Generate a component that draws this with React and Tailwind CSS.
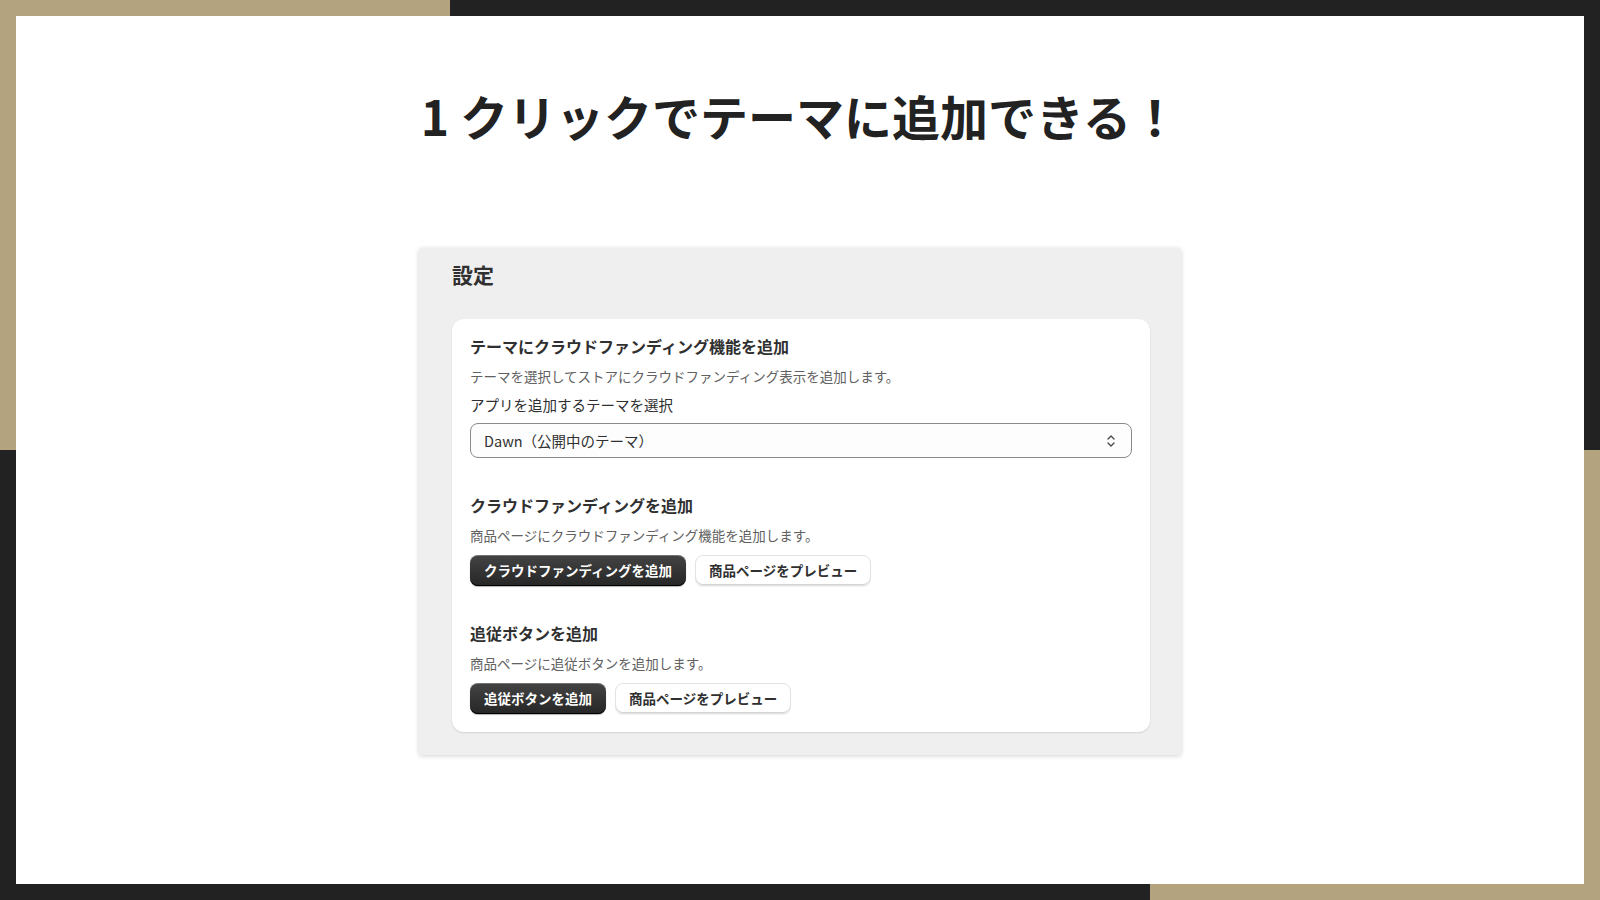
import React from "react";

const jp = { fontFamily: '"Noto Sans CJK JP", "Noto Sans", sans-serif' };

const SelectChevron = () => (
  <svg width="12" height="16" viewBox="0 0 12 16" fill="none" stroke="#4a4a4a" strokeWidth="1.4" strokeLinecap="round" strokeLinejoin="round">
    <path d="M3 6l3-3 3 3" />
    <path d="M3 10l3 3 3-3" />
  </svg>
);

const PrimaryButton = ({ children }) => (
  <button className="h-[31px] px-[14px] rounded-lg bg-gradient-to-b from-[#444444] to-[#262626] text-white text-[13.5px] font-bold leading-none shadow-[inset_0_-1px_0_#000,inset_0_1px_0_rgba(255,255,255,0.25),0_1px_1px_rgba(0,0,0,0.3)]">
    {children}
  </button>
);

const SecondaryButton = ({ children }) => (
  <button className="h-[31px] px-[13px] rounded-lg bg-white text-[#303030] text-[13.5px] font-bold leading-none border border-[#e3e3e3] shadow-[inset_0_-1px_0_#d4d4d4,0_1px_1px_rgba(0,0,0,0.06)]">
    {children}
  </button>
);

const Section = ({ title, description, primary, mt }) => (
  <div className={mt}>
    <h3 className="text-[16px] leading-6 font-bold text-[#303030]">{title}</h3>
    <p className="mt-2 text-[13.5px] leading-5 text-[#616161]">{description}</p>
    <div className="mt-[10px] flex gap-[9px]">
      <PrimaryButton>{primary}</PrimaryButton>
      <SecondaryButton>商品ページをプレビュー</SecondaryButton>
    </div>
  </div>
);

const App = () => {
  return (
    <div className="w-[1600px] h-[900px] flex flex-col" style={jp}>
      <div className="h-4 flex">
        <div className="w-[450px] bg-[#b3a47f]" />
        <div className="flex-1 bg-[#222222]" />
      </div>

      <div className="flex-1 flex">
        <div className="w-4 flex flex-col">
          <div className="flex-1 bg-[#b3a47f]" />
          <div className="flex-1 bg-[#222222]" />
        </div>

        <main className="flex-1 bg-white flex flex-col items-center">
          <h1 className="mt-[70px] text-[48px] leading-[58px] font-bold text-[#222222]">
            1 クリックでテーマに追加できる！
          </h1>

          <section className="mt-[104px] w-[762px] bg-[#efefef] rounded-[3px] shadow-[0_1px_5px_rgba(0,0,0,0.18)] pl-[33px] pr-[31px] pt-3 pb-[23px]">
            <h2 className="text-[21px] leading-7 font-bold text-[#303030]">設定</h2>

            <div className="mt-[31px] bg-white rounded-xl shadow-[0_1px_2px_rgba(0,0,0,0.12)] px-[18px] pt-[15px] pb-[18px]">
              <h3 className="text-[16px] leading-6 font-bold text-[#303030]">
                テーマにクラウドファンディング機能を追加
              </h3>
              <p className="mt-2 text-[13.5px] leading-5 text-[#616161]">
                テーマを選択してストアにクラウドファンディング表示を追加します。
              </p>
              <p className="mt-[9px] text-[14.5px] leading-5 text-[#303030]">
                アプリを追加するテーマを選択
              </p>
              <div className="mt-2 h-[35px] rounded-lg border border-[#8a8a8a] bg-[#fdfdfd] flex items-center justify-between pl-[13px] pr-[14px]">
                <span className="text-[14.5px] text-[#303030]">Dawn（公開中のテーマ）</span>
                <SelectChevron />
              </div>

              <Section
                mt="mt-[35px]"
                title="クラウドファンディングを追加"
                description="商品ページにクラウドファンディング機能を追加します。"
                primary="クラウドファンディングを追加"
              />
              <Section
                mt="mt-[35px]"
                title="追従ボタンを追加"
                description="商品ページに追従ボタンを追加します。"
                primary="追従ボタンを追加"
              />
            </div>
          </section>
        </main>

        <div className="w-4 flex flex-col">
          <div className="flex-1 bg-[#222222]" />
          <div className="flex-1 bg-[#b3a47f]" />
        </div>
      </div>

      <div className="h-4 flex">
        <div className="w-[1150px] bg-[#222222]" />
        <div className="flex-1 bg-[#b3a47f]" />
      </div>
    </div>
  );
};

export default App;
